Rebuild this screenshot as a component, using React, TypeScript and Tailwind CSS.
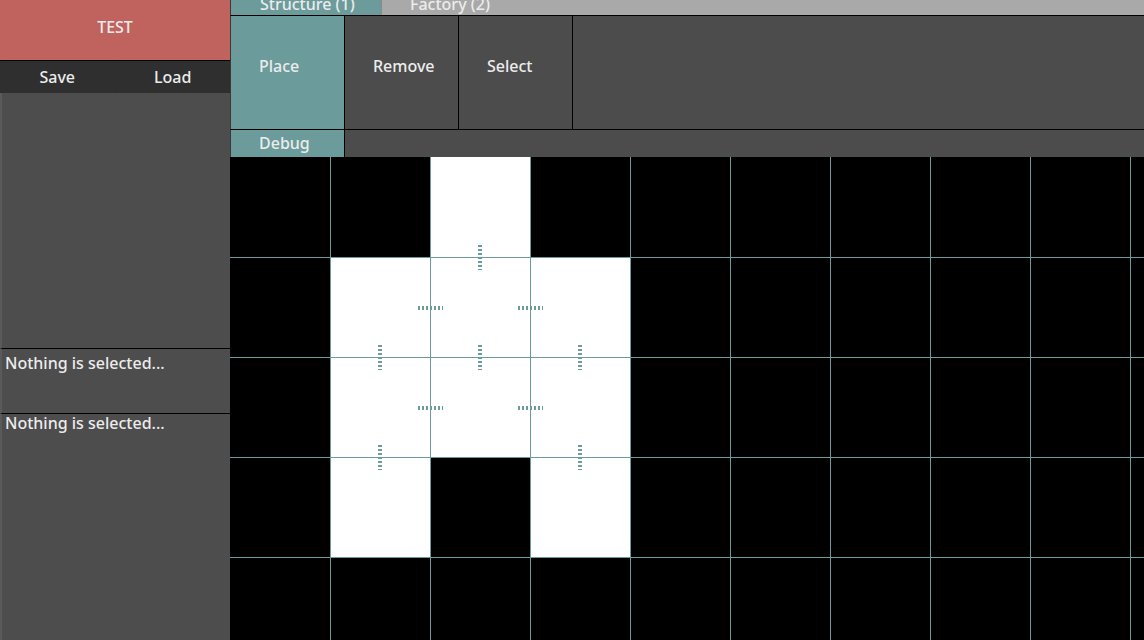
import React from "react";

const WHITE = new Set(["2-0", "1-1", "2-1", "3-1", "1-2", "2-2", "3-2", "1-3", "3-3"]);

const vMarkers = [
  [248, 88],
  [148, 188],
  [248, 188],
  [348, 188],
  [148, 288],
  [348, 288],
];
const hMarkers = [
  [188, 149],
  [288, 149],
  [188, 249],
  [288, 249],
];

function ToolButton({ label, active }: { label: string; active?: boolean }) {
  return (
    <div
      className={
        "w-[114px] h-full border-r border-black pl-[28px] pt-[39px] leading-[22px] text-[16px] font-medium text-[#ececec] " +
        (active ? "bg-[#6b9b9b]" : "bg-[#4c4c4c]")
      }
    >
      {label}
    </div>
  );
}

export default function App() {
  const cells: React.ReactNode[] = [];
  for (let r = 0; r < 5; r++) {
    for (let c = 0; c < 10; c++) {
      const white = WHITE.has(`${c}-${r}`);
      cells.push(
        <div
          key={`${c}-${r}`}
          className={
            "border-[#6b9b9b] " +
            (c > 0 ? "border-l " : "") +
            (r > 0 ? "border-t " : "") +
            (white ? "bg-white" : "bg-black")
          }
        />
      );
    }
  }

  return (
    <div className="flex w-[1144px] h-[640px] overflow-hidden font-['Noto_Sans',sans-serif] text-[#ececec] text-[16px]">
      <aside className="w-[230px] shrink-0 flex flex-col bg-[#4d4d4d]">
        <div className="h-[61px] border-b border-black bg-[#c0635f] flex justify-center pt-[16px] leading-[22px] font-medium">
          TEST
        </div>
        <div className="h-[32px] flex bg-[#2e2e2e] gap-[1px]">
          <div className="flex-1 flex items-center justify-center leading-[22px] font-medium rounded-[2px] bg-[#2f2f2f]">
            Save
          </div>
          <div className="flex-1 flex items-center justify-center leading-[22px] font-medium rounded-[2px] bg-[#2f2f2f]">
            Load
          </div>
        </div>
        <div className="h-[256px] border-b border-black border-l-2 border-l-[#5a5a5a]" />
        <div className="h-[65px] border-b border-black border-l-2 border-l-[#5a5a5a] pl-[3px] pt-[3px] leading-[22px] font-medium">
          Nothing is selected...
        </div>
        <div className="flex-1 border-l-2 border-l-[#5a5a5a] pl-[3px] leading-[22px] font-medium">
          <div className="-mt-[2px]">Nothing is selected...</div>
        </div>
      </aside>

      <main className="flex-1 flex flex-col min-w-0">
        <div className="h-[16px] border-b border-black flex border-l border-l-[#3a3a3a] overflow-hidden">
          <div className="w-[150px] bg-[#6b9b9b] pl-[29px] leading-[8px] font-medium whitespace-nowrap">Structure (1)</div>
          <div className="w-[1px] bg-[#8a8a8a]" />
          <div className="flex-1 bg-[#a9a9a9] pl-[28px] leading-[8px] font-medium whitespace-nowrap">Factory (2)</div>
        </div>
        <div className="h-[114px] border-b border-black flex border-l border-l-[#3a3a3a] bg-[#4c4c4c]">
          <ToolButton label="Place" active />
          <ToolButton label="Remove" />
          <ToolButton label="Select" />
          <div className="flex-1" />
        </div>
        <div className="h-[27px] flex border-l border-l-[#3a3a3a] bg-[#4c4c4c]">
          <div className="w-[114px] border-r border-black bg-[#6b9b9b] pl-[28px] pt-[2px] leading-[22px] font-medium">
            Debug
          </div>
          <div className="flex-1" />
        </div>
        <div className="flex-1 relative overflow-hidden bg-black">
          <div className="grid grid-cols-[repeat(10,100px)] grid-rows-[repeat(5,100px)]">{cells}</div>
          {vMarkers.map(([l, t], i) => (
            <div
              key={"v" + i}
              className="absolute w-[4px] h-[25px] bg-[repeating-linear-gradient(to_bottom,#6b9b9b_0px,#6b9b9b_2px,transparent_2px,transparent_4px)]"
              style={{ left: l, top: t }}
            />
          ))}
          {hMarkers.map(([l, t], i) => (
            <div
              key={"h" + i}
              className="absolute w-[25px] h-[4px] bg-[repeating-linear-gradient(to_right,#6b9b9b_0px,#6b9b9b_2px,transparent_2px,transparent_4px)]"
              style={{ left: l, top: t }}
            />
          ))}
        </div>
      </main>
    </div>
  );
}
